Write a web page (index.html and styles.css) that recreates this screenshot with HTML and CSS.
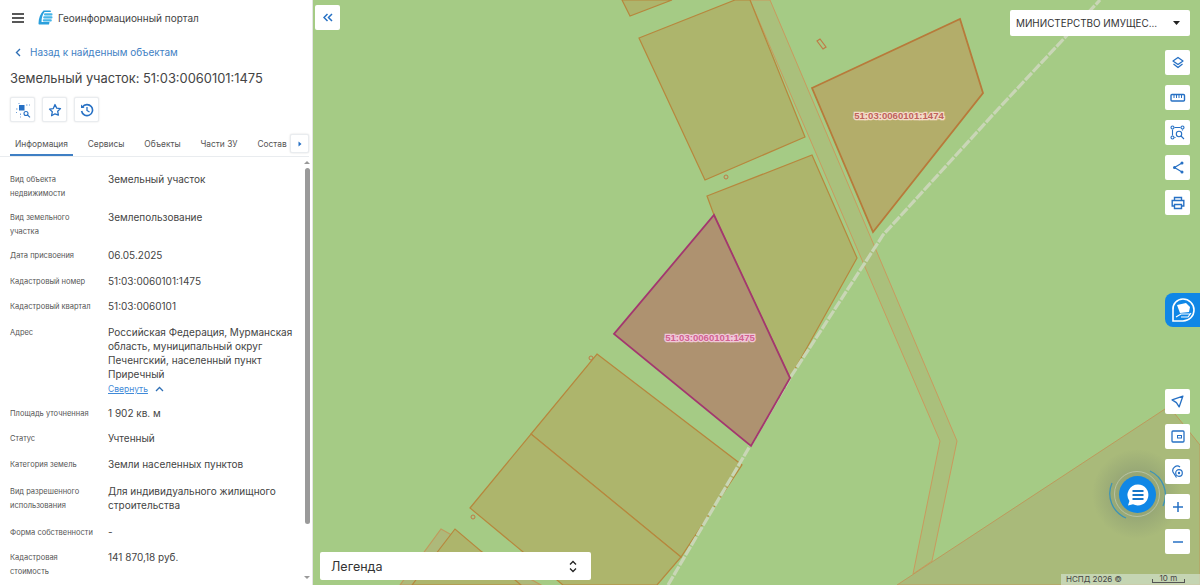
FILE: index.html
```html
<!DOCTYPE html>
<html lang="ru">
<head>
  <meta charset="UTF-8">
  <title>Геоинформационный портал</title>
  <link rel="stylesheet" href="styles.css">
</head>
<body>
  <aside class="panel">
    <header class="top-bar">
      <svg class="burger" width="14" height="10" viewBox="0 0 14 10"><path d="M1 1h12M1 5h12M1 9h12" stroke="#222" stroke-width="1.4"/></svg>
      <svg class="logo" width="15" height="15" viewBox="0 0 15 15">
        <path d="M5.500 .5H12.500L13 2H6.500C4.500 4.500 3.500 8 3.500 12H11.500L11 14.500H1.500C.8 14.500 .5 14 .5 13.500 .5 8 2.500 3.500 5.500 .5Z" fill="#2a9fdc"/>
        <rect x="6" y="3.200" width="8.500" height="2.200" rx="1" fill="#46b5e8"/>
        <rect x="5.200" y="6.200" width="9.300" height="2.200" rx="1" fill="#46b5e8"/>
        <rect x="4.800" y="9.200" width="9" height="2.200" rx="1" fill="#46b5e8"/>
      </svg>
      <span class="portal-name">Геоинформационный портал</span>
    </header>

    <a class="back-link">
      <svg width="6" height="9" viewBox="0 0 6 9"><path d="M5 1L1.500 4.500 5 8" fill="none" stroke="#2f6fb5" stroke-width="1.400"/></svg>
      Назад к найденным объектам
    </a>

    <h1 class="object-title">Земельный участок: 51:03:0060101:1475</h1>

    <div class="actions">
      <button class="icon-btn">
        <svg width="16" height="16" viewBox="0 0 16 16">
          <rect x="4" y="3" width="5.500" height="5.500" fill="#2670c4"/>
          <path d="M1 7h1.500M3.500 1.500h1M11 3h1.500M14 3h1M1.500 10v1M5.500 11.500v1.500M5.500 14.500v1" stroke="#6e9fd8" stroke-width="1"/>
          <circle cx="11" cy="11.500" r="2" fill="none" stroke="#2670c4" stroke-width="1.100"/>
          <path d="M12.500 13L15 15.300" stroke="#2670c4" stroke-width="1.100"/>
        </svg>
      </button>
      <button class="icon-btn">
        <svg width="14" height="14" viewBox="0 0 14 14"><path d="M7 1.500l1.700 3.600 3.800.5-2.800 2.700.7 3.900L7 10.800l-3.400 1.900.7-3.900L1.500 6.100l3.800-.5z" fill="none" stroke="#2670c4" stroke-width="1.300" stroke-linejoin="round"/></svg>
      </button>
      <button class="icon-btn">
        <svg width="14" height="14" viewBox="0 0 14 14"><path d="M2.500 4A5.500 5.500 0 1 1 1.600 8" fill="none" stroke="#2670c4" stroke-width="1.600"/><path d="M1 1.500v3.500h3.500z" fill="#2670c4"/><path d="M7 4v3.500l2.500 1.500" fill="none" stroke="#2670c4" stroke-width="1.300"/></svg>
      </button>
    </div>

    <nav class="tabs">
      <span class="tab tab-active">Информация</span>
      <span class="tab">Сервисы</span>
      <span class="tab">Объекты</span>
      <span class="tab">Части ЗУ</span>
      <span class="tab">Состав</span>
      <span class="tab-next"><svg width="4" height="6" viewBox="0 0 4 6"><path d="M.5 .5L3.500 3 .5 5.500z" fill="#2670c4"/></svg></span>
    </nav>

    <div class="details">
      <div class="rows">
        <div class="row"><div class="label">Вид объекта недвижимости</div><div class="value">Земельный участок</div></div>
        <div class="row"><div class="label">Вид земельного участка</div><div class="value">Землепользование</div></div>
        <div class="row"><div class="label">Дата присвоения</div><div class="value">06.05.2025</div></div>
        <div class="row"><div class="label">Кадастровый номер</div><div class="value">51:03:0060101:1475</div></div>
        <div class="row"><div class="label">Кадастровый квартал</div><div class="value">51:03:0060101</div></div>
        <div class="row">
          <div class="label">Адрес</div>
          <div class="value">
            Российская Федерация, Мурманская область, муниципальный округ Печенгский, населенный пункт Приречный
            <div class="collapse"><a>Свернуть</a>
              <svg width="9" height="6" viewBox="0 0 9 6"><path d="M1 5l3.500-3.500L8 5" fill="none" stroke="#2f6fb5" stroke-width="1.300"/></svg>
            </div>
          </div>
        </div>
        <div class="row"><div class="label">Площадь уточненная</div><div class="value">1 902 кв. м</div></div>
        <div class="row"><div class="label">Статус</div><div class="value">Учтенный</div></div>
        <div class="row row-loose"><div class="label">Категория земель</div><div class="value">Земли населенных пунктов</div></div>
        <div class="row row-loose"><div class="label">Вид разрешенного использования</div><div class="value">Для индивидуального жилищного строительства</div></div>
        <div class="row"><div class="label">Форма собственности</div><div class="value">-</div></div>
        <div class="row"><div class="label">Кадастровая стоимость</div><div class="value">141 870,18 руб.</div></div>
      </div>
      <div class="scrollbar">
        <span class="arrow arrow-up"></span>
        <span class="thumb"></span>
        <span class="arrow arrow-down"></span>
      </div>
    </div>
  </aside>

  <main class="map">
    <svg class="map-canvas" viewBox="313 0 887 585" width="887" height="585">
      <defs>
        <radialGradient id="halo">
          <stop offset="0.4" stop-color="#7f8f70" stop-opacity="0.5"/>
          <stop offset="1" stop-color="#7f8f70" stop-opacity="0"/>
        </radialGradient>
      </defs>
      <rect x="313" y="0" width="887" height="585" fill="#a5cb85"/>

      <path class="road" d="M750 0H770L957 441 932 561 913 574 940 441Z"/>

      <g class="parcel">
        <path d="M622 0L630 16 672 0Z"/>
        <path d="M639 38L735 0H750L805 137 705 180Z"/>
        <path d="M707 196L812 155 857 258 790 378 714 215Z"/>
        <path d="M597 354L742 465 681 557 531 434Z"/>
        <path d="M470 508L531 434 681 557 657 585H563Z"/>
        <path class="parcel-wide" d="M897 585L1165 409 1175 414 1200 445V585Z"/>
        <path class="parcel-faint" d="M400 585L441 529 541 585Z"/>
        <path d="M412 585L455 529 521 585Z"/>
        <path class="mark" d="M817 41L820 39 826 47 823 49Z"/>
        <path class="parcel-strong" d="M812 88L960 19 983 93 873 232Z"/>
      </g>
      <g class="marks">
        <circle cx="726" cy="177" r="2"/>
        <circle cx="591" cy="358" r="2"/>
        <circle cx="473" cy="517" r="2"/>
      </g>

      <path class="track" d="M668 585L790 378 883 235 1000 107 1100 0"/>

      <path class="parcel-selected" d="M714 215L790 378 751 446 614 334Z"/>

      <text class="parcel-label" x="899" y="119">51:03:0060101:1474</text>
      <text class="parcel-label parcel-label-selected" x="710" y="341">51:03:0060101:1475</text>

      <circle cx="1137" cy="494" r="45" fill="url(#halo)"/>
      <circle cx="1137" cy="494" r="22.500" fill="none" stroke="#c5cdb8" stroke-opacity="0.7"/>
      <path class="ring" d="M1150 471A26.500 26.500 0 0 1 1163 506M1126 518A26.500 26.500 0 0 1 1112 483"/>
    </svg>

    <button class="map-btn collapse-btn">
      <svg width="10" height="9" viewBox="0 0 10 9"><path d="M4.500 1L1 4.500 4.500 8M9 1L5.500 4.500 9 8" fill="none" stroke="#2670c4" stroke-width="1.500"/></svg>
    </button>

    <div class="org-select">
      <span>МИНИСТЕРСТВО ИМУЩЕС...</span>
      <svg width="7" height="4" viewBox="0 0 7 4"><path d="M0 0h7L3.500 4z" fill="#222"/></svg>
    </div>

    <div class="tools tools-top">
      <button class="map-btn"><svg width="14" height="14" viewBox="0 0 14 14"><path d="M7 1.500L12 5 7 8.500 2 5z M2.500 8L7 11.500 11.500 8" fill="none" stroke="#2670c4" stroke-width="1.300" stroke-linejoin="round"/></svg></button>
      <button class="map-btn"><svg width="16" height="10" viewBox="0 0 16 10"><rect x="1" y="1.500" width="13.500" height="6.500" rx="1" fill="none" stroke="#2670c4" stroke-width="1.400"/><path d="M4 2v3M6.500 2v3M9 2v3M11.500 2v3" stroke="#2670c4"/></svg></button>
      <button class="map-btn"><svg width="15" height="15" viewBox="0 0 15 15"><g fill="none" stroke="#2670c4" stroke-width="1.100"><circle cx="2.500" cy="2.500" r="1.500"/><circle cx="12.500" cy="2.500" r="1.500"/><circle cx="2.500" cy="12.500" r="1.500"/><circle cx="9" cy="9" r="2.700"/><path d="M4.500 2.500h6M2.500 4.500v6M12.500 4.500v1M4.500 12.500h1M11 11l3 3"/></g></svg></button>
      <button class="map-btn"><svg width="12" height="13" viewBox="0 0 12 13"><path d="M10 2L2.500 6.500 10 11" fill="none" stroke="#2670c4" stroke-width="1.200"/><circle cx="10" cy="2" r="1.500" fill="#2670c4"/><circle cx="2.500" cy="6.500" r="1.500" fill="#2670c4"/><circle cx="10" cy="11" r="1.500" fill="#2670c4"/></svg></button>
      <button class="map-btn"><svg width="14" height="14" viewBox="0 0 14 14"><path d="M3.500 4V1.500h7V4M3.500 10H1.200V4.500h11.600V10h-2.300M3.500 8.500h7v4h-7z" fill="none" stroke="#2670c4" stroke-width="1.400"/></svg></button>
    </div>

    <div class="side-tab">
      <svg width="26" height="26" viewBox="0 0 26 26">
        <path d="M13 2A11 11 0 1 1 13 24H3V13A10 10 0 0 1 13 2Z" fill="none" stroke="#fff" stroke-width="1.600"/>
        <path d="M7 8L16 6 20 10 19 15 10 16Z" fill="#fff"/>
        <path d="M6 20L11 17H20M11 20H18L21 16" fill="none" stroke="#fff" stroke-width="1.200"/>
      </svg>
    </div>

    <div class="tools tools-bottom">
      <button class="map-btn"><svg width="13" height="13" viewBox="0 0 12 12"><path d="M11 1L1 4.500 5 7l2.500 4z" fill="none" stroke="#2670c4" stroke-width="1.200" stroke-linejoin="round"/></svg></button>
      <button class="map-btn"><svg width="14" height="13" viewBox="0 0 14 13"><rect x="1" y="1" width="12" height="11" rx="1" fill="none" stroke="#2670c4" stroke-width="1.300"/><rect x="6.500" y="5.500" width="4" height="2.500" fill="none" stroke="#2670c4"/></svg></button>
      <button class="map-btn"><svg width="14" height="14" viewBox="0 0 14 14"><path d="M5.500 12.500L2 7A4.500 4.500 0 0 1 9 2" fill="none" stroke="#2670c4" stroke-width="1.200"/><circle cx="8" cy="8" r="3.300" fill="none" stroke="#2670c4" stroke-width="1.200"/><circle cx="8" cy="8" r="1.200" fill="#2670c4"/></svg></button>
      <button class="map-btn"><svg width="12" height="12" viewBox="0 0 12 12"><path d="M6 1v10M1 6h10" stroke="#2670c4" stroke-width="1.500"/></svg></button>
      <button class="map-btn"><svg width="12" height="12" viewBox="0 0 12 12"><path d="M1 6h10" stroke="#2670c4" stroke-width="1.500"/></svg></button>
    </div>

    <button class="chat-btn">
      <svg width="24" height="24" viewBox="0 0 24 24">
        <path d="M12 1.500A10.500 10.500 0 1 1 7 21.300L2 22.500 3.400 18A10.500 10.500 0 0 1 12 1.500Z" fill="#fff"/>
        <path d="M6.500 8h11M6.500 12h11M6.500 16h11" stroke="#1677c9" stroke-width="1.800"/>
      </svg>
    </button>

    <div class="legend">
      <span>Легенда</span>
      <svg width="8" height="13" viewBox="0 0 8 13"><path d="M1 4.500L4 1.500l3 3M1 8.500l3 3 3-3" fill="none" stroke="#222" stroke-width="1.300"/></svg>
    </div>

    <div class="attribution">
      <span>НСПД 2026 ©</span>
      <span class="scale">10 m</span>
    </div>
  </main>
</body>
</html>
```

FILE: styles.css
```css
* {
  box-sizing: border-box;
}

body {
  margin: 0;
  display: flex;
  height: 585px;
  overflow: hidden;
  font-family: Inter, "Liberation Sans", sans-serif;
  color: #333;
  background-color: #fff;
}

button {
  padding: 0;
  border: none;
  background-color: #fff;
  font: inherit;
}

/* левая панель */
.panel {
  display: flex;
  flex-direction: column;
  width: 313px;
  flex-shrink: 0;
  background-color: #fff;
  border-right: 1px solid #e4e4e4;
}

.top-bar {
  display: flex;
  align-items: center;
  height: 35px;
  padding-left: 11px;
}

.burger {
  margin-right: 13px;
}

.logo {
  margin-right: 5px;
}

.portal-name {
  font-size: 10px;
  color: #444;
}

.back-link {
  display: flex;
  align-items: center;
  gap: 9px;
  margin: 11px 0 0 15px;
  font-size: 10px;
  line-height: 13px;
  color: #3f7fc4;
}

.object-title {
  margin: 11px 0 0 10px;
  font-size: 12.900px;
  line-height: 18px;
  font-weight: 400;
  color: #444;
}

.actions {
  display: flex;
  gap: 7px;
  margin: 9px 0 0 10px;
}

.icon-btn {
  display: flex;
  align-items: center;
  justify-content: center;
  width: 25px;
  height: 25px;
  border: 1px solid #e9ecef;
  border-radius: 2px;
  box-shadow: 0 0 2px rgba(0, 0, 0, 0.12);
}

.tabs {
  position: relative;
  display: flex;
  gap: 19.800px;
  height: 27px;
  margin: 8px 3px 0 0;
  padding-left: 15px;
  border-bottom: 1px solid #e9ecef;
}

.tab {
  padding-top: 6px;
  font-size: 8.400px;
  line-height: 16px;
  white-space: nowrap;
  color: #555;
}

.tab-active {
  position: relative;
}

.tab-active::after {
  content: "";
  position: absolute;
  left: -5px;
  right: -5px;
  bottom: 0;
  height: 2px;
  background-color: #3f7fc4;
}

.tab-next {
  position: absolute;
  top: 4px;
  right: 0;
  display: flex;
  align-items: center;
  justify-content: center;
  width: 19px;
  height: 19px;
  background-color: #fff;
  border: 1px solid #e9ecef;
  border-radius: 2px;
  box-shadow: 0 0 2px rgba(0, 0, 0, 0.15);
}

.details {
  display: flex;
  flex: 1;
  min-height: 0;
}

.rows {
  flex: 1;
  padding: 15px 0 0 10px;
  overflow: hidden;
}

.row {
  display: grid;
  grid-template-columns: 98px 187px;
  min-height: 15.500px;
  margin-bottom: 10px;
}

.row-loose {
  margin-bottom: 12px;
}

.label {
  padding-top: 1px;
  padding-right: 10px;
  font-size: 7.500px;
  line-height: 13.500px;
  color: #555;
}

.value {
  font-size: 10px;
  line-height: 14.300px;
  color: #444;
}

.collapse {
  display: flex;
  align-items: center;
  gap: 7px;
  font-size: 8.500px;
  line-height: 14px;
}

.collapse a {
  color: #3f8ad8;
  text-decoration: underline;
}

.scrollbar {
  display: flex;
  flex-direction: column;
  align-items: center;
  width: 8px;
  margin-right: 1px;
  padding-top: 4px;
}

.thumb {
  width: 5px;
  height: 356px;
  margin: 4px 0 auto;
  border-radius: 3px;
  background-color: #9a9a9a;
}

.arrow {
  width: 0;
  height: 0;
  border-left: 3px solid transparent;
  border-right: 3px solid transparent;
}

.arrow-up {
  border-bottom: 3px solid #999;
}

.arrow-down {
  margin-bottom: 6px;
  border-top: 3px solid #999;
}

/* карта */
.map {
  position: relative;
  flex: 1;
  overflow: hidden;
  background-color: #a5cb85;
}

.map-canvas {
  display: block;
}

.parcel path {
  fill: #adb56c;
  stroke: #b7873d;
  stroke-width: 1.200;
}

.parcel .parcel-strong {
  fill: #b3ad6a;
  stroke: #b87a3a;
  stroke-width: 1.800;
}

.parcel .parcel-wide {
  fill: #a9ba7a;
  stroke: #bd9a5c;
  stroke-width: 1;
}

.parcel .parcel-faint {
  fill: #adb97a;
  stroke: #c09a5c;
}

.parcel .mark {
  fill: none;
  stroke: #c07a45;
}

.marks circle {
  fill: none;
  stroke: #c07a45;
}

.road {
  fill: #aac07c;
  stroke: #c99a5e;
  stroke-width: 1;
}

.track {
  fill: none;
  stroke: #c9d6b6;
  stroke-width: 3.200;
  stroke-dasharray: 10 1.500;
}

.parcel-selected {
  fill: #ae9270;
  stroke: #a3376f;
  stroke-width: 1.800;
}

.parcel-label {
  font-family: "Liberation Sans", sans-serif;
  font-size: 9.600px;
  font-weight: 700;
  text-anchor: middle;
  fill: #c0625a;
  stroke: #f3dcc8;
  stroke-width: 2.500px;
  paint-order: stroke;
}

.parcel-label-selected {
  fill: #d0608f;
  stroke: #f0c8d8;
}

.ring {
  fill: none;
  stroke: #3b93b8;
  stroke-width: 1.300;
}

.map-btn {
  display: flex;
  align-items: center;
  justify-content: center;
  width: 25px;
  height: 25px;
  border-radius: 2px;
  background-color: #fff;
}

.collapse-btn {
  position: absolute;
  top: 5px;
  left: 2px;
}

.org-select {
  position: absolute;
  top: 10px;
  right: 10px;
  display: flex;
  align-items: center;
  justify-content: space-between;
  width: 180px;
  height: 26px;
  padding: 0 10px 0 6px;
  border-radius: 2px;
  background-color: #fff;
  font-size: 9.900px;
  color: #333;
}

.tools {
  position: absolute;
  right: 10px;
  display: flex;
  flex-direction: column;
  gap: 10px;
}

.tools-top {
  top: 50px;
}

.tools-bottom {
  top: 389px;
}

.side-tab {
  position: absolute;
  top: 293px;
  right: 0;
  display: flex;
  align-items: center;
  justify-content: center;
  width: 35px;
  height: 34px;
  border-radius: 8px 0 0 8px;
  background-color: #0f87e6;
}

.chat-btn {
  position: absolute;
  top: 476px;
  left: 806px;
  display: flex;
  align-items: center;
  justify-content: center;
  width: 37px;
  height: 37px;
  border-radius: 50%;
  background-color: #0f87e6;
}

.legend {
  position: absolute;
  left: 7px;
  bottom: 5px;
  display: flex;
  align-items: center;
  justify-content: space-between;
  width: 271px;
  height: 28px;
  padding: 0 14px 0 11px;
  border-radius: 2px;
  background-color: #fff;
  font-size: 12.500px;
  color: #333;
}

.attribution {
  position: absolute;
  right: 0;
  bottom: 0;
  display: flex;
  gap: 30px;
  width: 139px;
  height: 11px;
  padding-left: 5px;
  background-color: rgba(220, 235, 225, 0.55);
  font-size: 8px;
  line-height: 11px;
  color: #444;
}

.scale {
  position: relative;
  width: 33px;
  height: 9px;
  border-bottom: 1px solid #555;
  text-align: center;
  line-height: 9px;
}

.scale::before,
.scale::after {
  content: "";
  position: absolute;
  bottom: 0;
  width: 1px;
  height: 3px;
  background-color: #555;
}

.scale::before {
  left: 0;
}

.scale::after {
  right: 0;
}
```
